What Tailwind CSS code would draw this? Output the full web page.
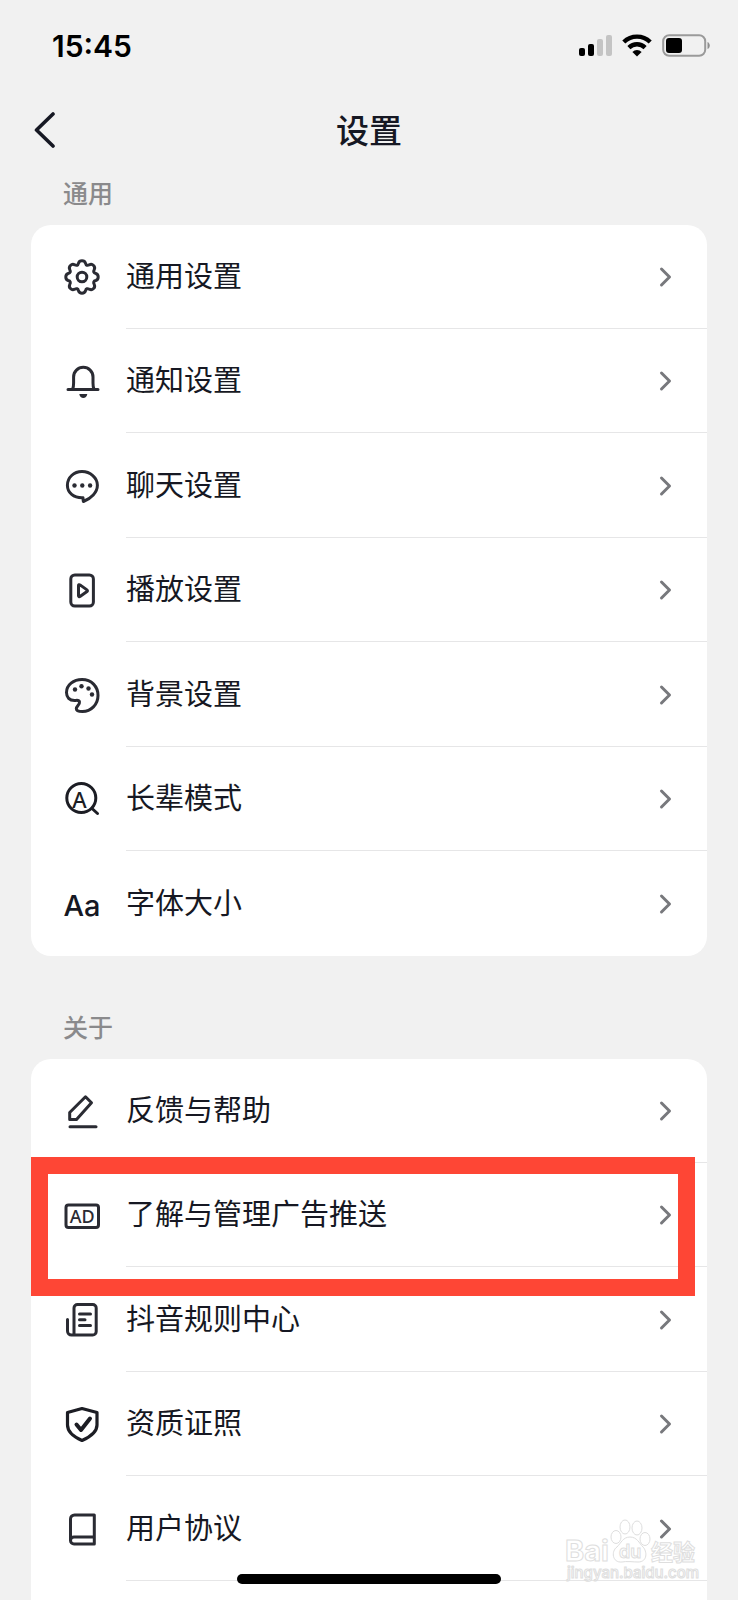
<!DOCTYPE html>
<html lang="zh-CN">

<head>
  <meta charset="UTF-8">
  <meta name="viewport" content="width=device-width, initial-scale=1.0">
  <title>设置</title>
  <script src="https://cdn.jsdelivr.net/npm/@tailwindcss/browser@4"></script>
</head>

<body class="bg-[#f1f1f1] text-[#161823] font-['Inter','Noto_Sans_CJK_SC',sans-serif]">
  <div class="relative flex h-screen flex-col overflow-hidden">

    <!-- Status bar -->
    <div class="flex h-23 shrink-0 items-center justify-between pr-7 pl-13 text-black">
      <span class="text-[30px] font-semibold">15:45</span>
      <div class="flex items-center gap-2.5">
        <svg class="h-6 w-[34px]" viewBox="0 0 34 24">
          <rect x="1" y="14" width="6" height="8" rx="2" />
          <rect x="10" y="10" width="6" height="12" rx="2" />
          <rect x="19" y="5" width="6" height="17" rx="2" fill="#c4c4c4" />
          <rect x="28" y="1" width="6" height="21" rx="2" fill="#c4c4c4" />
        </svg>
        <svg class="h-6 w-[30px]" viewBox="0 0 30 24" fill="none" stroke="#000" stroke-width="4.4">
          <path d="M1.8 8a19 19 0 0 1 26.4 0" />
          <path d="M6.9 13.600a11.6 11.6 0 0 1 16.2 0" />
          <path d="M15 22.4l-4.6-4.5a6.6 6.6 0 0 1 9.200 0z" fill="#000" stroke="none" />
        </svg>
        <svg class="h-6 w-12" viewBox="0 0 48 24">
          <rect x="1.200" y="1.200" width="42" height="20.600" rx="6" fill="none" stroke="#9a9a9a" stroke-width="2" />
          <rect x="4" y="4" width="16" height="15" rx="3" />
          <path d="M45.500 8c3 1 3 6 0 7z" fill="#8f8f8f" />
        </svg>
      </div>
    </div>

    <!-- Title bar -->
    <header class="relative flex h-20 shrink-0 items-center justify-center">
      <button type="button" aria-label="返回" class="absolute left-8">
        <svg class="h-10 w-6" viewBox="0 0 24 40" fill="none" stroke="currentColor" stroke-width="3.600" stroke-linecap="round" stroke-linejoin="round">
          <path d="M21 2L4.500 18 21 34" />
        </svg>
      </button>
      <h1 class="text-[33px] font-medium">设置</h1>
    </header>

    <main class="flex flex-1 flex-col px-[31px]">
      <h2 class="h-[53px] shrink-0 pl-8 text-[25px] leading-[45px] font-medium text-[#8a8a8c]">通用</h2>
      <ul class="shrink-0 rounded-[20px] bg-white">
        <li>
          <a href="#general" class="flex items-center gap-[26px] pl-[33px]">
            <svg class="size-9" viewBox="0 0 36 36" fill="none" stroke="#2a2b33" stroke-width="3" stroke-linejoin="round">
              <path d="M14.500 4.200C15.500 1 20.500 1 21.500 4.200C22 6.500 23.500 6.800 25.300 5.800C28.500 4.200 31.800 7.500 30.200 10.700C29.200 12.500 29.500 14 31.800 14.500C35 15.500 35 20.500 31.800 21.500C29.500 22 29.200 23.500 30.200 25.300C31.800 28.500 28.500 31.800 25.300 30.200C23.500 29.200 22 29.500 21.500 31.800C20.500 35 15.500 35 14.500 31.800C14 29.500 12.500 29.200 10.700 30.200C7.500 31.800 4.200 28.500 5.800 25.300C6.800 23.500 6.500 22 4.200 21.500C1 20.500 1 15.500 4.200 14.500C6.500 14 6.800 12.500 5.800 10.700C4.200 7.500 7.500 4.200 10.700 5.800C12.500 6.800 14 6.500 14.500 4.200Z" />
              <circle cx="18" cy="18" r="4.800" />
            </svg>
            <span class="flex h-26 flex-1 items-center justify-between border-b border-[#e6e6e7] pr-8">
              <span class="text-[29px]">通用设置</span>
              <svg class="h-6 w-4" viewBox="0 0 16 24" fill="none" stroke="#77787c" stroke-width="3" stroke-linecap="round" stroke-linejoin="round"><path d="M2.500 4l8 8-8 8" /></svg>
            </span>
          </a>
        </li>
        <li class="pb-px">
          <a href="#notify" class="flex items-center gap-[26px] pl-[33px]">
            <svg class="size-9" viewBox="0 0 36 36" fill="none" stroke="#2a2b33" stroke-width="3" stroke-linecap="round">
              <path d="M4 26.500H34M8.700 26C9.500 24 9.600 22 9.600 20V14a9.700 9.700 0 0 1 19.400 0V20C29 22 29.100 24 29.900 26" />
              <path d="M15.300 31h8c-.5 5.200-7.500 5.200-8 0z" fill="#2a2b33" stroke="none" />
            </svg>
            <span class="flex h-26 flex-1 items-center justify-between border-b border-[#e6e6e7] pr-8">
              <span class="text-[29px]">通知设置</span>
              <svg class="h-6 w-4" viewBox="0 0 16 24" fill="none" stroke="#77787c" stroke-width="3" stroke-linecap="round" stroke-linejoin="round"><path d="M2.500 4l8 8-8 8" /></svg>
            </span>
          </a>
        </li>
        <li>
          <a href="#chat" class="flex items-center gap-[26px] pl-[33px]">
            <svg class="size-9" viewBox="0 0 36 36" fill="none" stroke="#2a2b33" stroke-width="3" stroke-linejoin="round">
              <path d="M19 29.800C9.500 30.200 3.400 24.600 3.400 17.300C3.400 9.500 9.800 3.600 18 3.600S33.400 9.500 33.400 17.300C33.400 24.500 27 30.500 19.400 33.500C19 32.500 19.200 31 19 29.800Z" />
              <g fill="#2a2b33" stroke="none"><circle cx="10.500" cy="17.500" r="2.200" /><circle cx="18.300" cy="17.500" r="2.200" /><circle cx="26.100" cy="17.500" r="2.200" /></g>
            </svg>
            <span class="flex h-26 flex-1 items-center justify-between border-b border-[#e6e6e7] pr-8">
              <span class="text-[29px]">聊天设置</span>
              <svg class="h-6 w-4" viewBox="0 0 16 24" fill="none" stroke="#77787c" stroke-width="3" stroke-linecap="round" stroke-linejoin="round"><path d="M2.500 4l8 8-8 8" /></svg>
            </span>
          </a>
        </li>
        <li class="pb-px">
          <a href="#playback" class="flex items-center gap-[26px] pl-[33px]">
            <svg class="size-9" viewBox="0 0 36 36" fill="none" stroke="#2a2b33" stroke-width="3" stroke-linejoin="round">
              <rect x="6.800" y="3" width="22.600" height="31" rx="4" />
              <path d="M14.500 13.500v10.200c0 .8.800 1.200 1.500.8l7-5c.6-.4.600-1.200 0-1.600l-7-5c-.7-.5-1.500-.1-1.500.6z" />
            </svg>
            <span class="flex h-26 flex-1 items-center justify-between border-b border-[#e6e6e7] pr-8">
              <span class="text-[29px]">播放设置</span>
              <svg class="h-6 w-4" viewBox="0 0 16 24" fill="none" stroke="#77787c" stroke-width="3" stroke-linecap="round" stroke-linejoin="round"><path d="M2.500 4l8 8-8 8" /></svg>
            </span>
          </a>
        </li>
        <li>
          <a href="#background" class="flex items-center gap-[26px] pl-[33px]">
            <svg class="size-9" viewBox="0 0 36 36" fill="none" stroke="#2a2b33" stroke-width="3" stroke-linejoin="round">
              <path d="M10.500 23.500C5.500 23.500 2.500 20.500 2.500 15.500C2.500 8 9.500 2.500 18 2.500C27.500 2.500 34 9.500 34 18.500C34 27.500 27 34.500 18.500 34.500C15 34.500 12.300 33.500 12.300 31.500C12.300 29.500 16 27.500 15.500 25C15 22.500 12.500 23.500 10.500 23.500Z" />
              <g fill="#2a2b33" stroke="none"><circle cx="11" cy="12.500" r="2.200" /><circle cx="17.500" cy="9.300" r="2.200" /><circle cx="24.500" cy="11.500" r="2.200" /><circle cx="28" cy="17.500" r="2.200" /></g>
            </svg>
            <span class="flex h-26 flex-1 items-center justify-between border-b border-[#e6e6e7] pr-8">
              <span class="text-[29px]">背景设置</span>
              <svg class="h-6 w-4" viewBox="0 0 16 24" fill="none" stroke="#77787c" stroke-width="3" stroke-linecap="round" stroke-linejoin="round"><path d="M2.500 4l8 8-8 8" /></svg>
            </span>
          </a>
        </li>
        <li class="pb-px">
          <a href="#elder" class="flex items-center gap-[26px] pl-[33px]">
            <svg class="size-9" viewBox="0 0 36 36" fill="none" stroke="#1c1d24" stroke-width="3" stroke-linecap="round">
              <circle cx="17.300" cy="17" r="14.500" />
              <path d="M28 27.500l5.500 5" />
              <text x="15.500" y="27" text-anchor="middle" font-family="Noto Sans" font-size="22" font-weight="500" fill="#1c1d24" stroke="none">A</text>
            </svg>
            <span class="flex h-26 flex-1 items-center justify-between border-b border-[#e6e6e7] pr-8">
              <span class="text-[29px]">长辈模式</span>
              <svg class="h-6 w-4" viewBox="0 0 16 24" fill="none" stroke="#77787c" stroke-width="3" stroke-linecap="round" stroke-linejoin="round"><path d="M2.500 4l8 8-8 8" /></svg>
            </span>
          </a>
        </li>
        <li>
          <a href="#font-size" class="flex items-center gap-[26px] pl-[33px]">
            <span class="flex w-9 justify-center pt-1 text-[29px] font-medium">Aa</span>
            <span class="flex h-26 flex-1 items-center justify-between pr-8">
              <span class="text-[29px]">字体大小</span>
              <svg class="h-6 w-4" viewBox="0 0 16 24" fill="none" stroke="#77787c" stroke-width="3" stroke-linecap="round" stroke-linejoin="round"><path d="M2.500 4l8 8-8 8" /></svg>
            </span>
          </a>
        </li>
      </ul>

      <h2 class="mt-[50px] h-[53px] shrink-0 pl-8 text-[25px] leading-[45px] font-medium text-[#8a8a8c]">关于</h2>
      <ul class="flex-1 rounded-t-[20px] bg-white">
        <li>
          <a href="#feedback" class="flex items-center gap-[26px] pl-[33px]">
            <svg class="size-9" viewBox="0 0 36 36" fill="none" stroke="#2a2b33" stroke-width="3" stroke-linecap="round" stroke-linejoin="round">
              <path d="M5.700 26.500v-7L21.500 3.800l6 6L12.500 26.500z" />
              <path d="M6 33.700H32" />
            </svg>
            <span class="flex h-26 flex-1 items-center justify-between border-b border-[#e6e6e7] pr-8">
              <span class="text-[29px]">反馈与帮助</span>
              <svg class="h-6 w-4" viewBox="0 0 16 24" fill="none" stroke="#77787c" stroke-width="3" stroke-linecap="round" stroke-linejoin="round"><path d="M2.500 4l8 8-8 8" /></svg>
            </span>
          </a>
        </li>
        <li class="relative pb-px">
          <a href="#ads" class="flex items-center gap-[26px] pl-[33px]">
            <svg class="size-9" viewBox="0 0 36 36" fill="none" stroke="#2a2b33" stroke-width="3">
              <rect x="2" y="8" width="32.500" height="22.500" rx="2.500" />
              <text x="18.200" y="25.700" text-anchor="middle" font-family="Noto Sans" font-size="18" font-weight="500" fill="#2a2b33" stroke="none">AD</text>
            </svg>
            <span class="flex h-26 flex-1 items-center justify-between border-b border-[#e6e6e7] pr-8">
              <span class="text-[29px]">了解与管理广告推送</span>
              <svg class="h-6 w-4" viewBox="0 0 16 24" fill="none" stroke="#77787c" stroke-width="3" stroke-linecap="round" stroke-linejoin="round"><path d="M2.500 4l8 8-8 8" /></svg>
            </span>
          </a>
          <!-- Highlight frame -->
          <div class="pointer-events-none absolute -top-1.5 right-3 -bottom-7 left-0 z-10 border-[17px] border-[#fe4635]"></div>
        </li>
        <li>
          <a href="#rules" class="flex items-center gap-[26px] pl-[33px]">
            <svg class="size-9" viewBox="0 0 36 36" fill="none" stroke="#2a2b33" stroke-width="3" stroke-linecap="round" stroke-linejoin="round">
              <path d="M10 33V6a3.500 3.500 0 0 1 3.500-3.500H28.700a3.500 3.500 0 0 1 3.500 3.500V29.500A3.500 3.500 0 0 1 28.700 33H7.500A4 4 0 0 1 3.500 29V17.500" />
              <path d="M15.500 12H26.500M15.500 17.800h5.500M15.500 23.500H26.500" />
            </svg>
            <span class="flex h-26 flex-1 items-center justify-between border-b border-[#e6e6e7] pr-8">
              <span class="text-[29px]">抖音规则中心</span>
              <svg class="h-6 w-4" viewBox="0 0 16 24" fill="none" stroke="#77787c" stroke-width="3" stroke-linecap="round" stroke-linejoin="round"><path d="M2.500 4l8 8-8 8" /></svg>
            </span>
          </a>
        </li>
        <li class="pb-px">
          <a href="#license" class="flex items-center gap-[26px] pl-[33px]">
            <svg class="size-9" viewBox="0 0 36 36" fill="none" stroke="#1c1d24" stroke-width="3.200" stroke-linecap="round" stroke-linejoin="round">
              <path d="M18 2.500L33 6.500v12.500c0 7-7 12-15 15.500C10 31 3.500 26 3.500 19V6.500z" />
              <path d="M12.500 18.500l4.500 5.500 9-11.500" stroke-width="4" />
            </svg>
            <span class="flex h-26 flex-1 items-center justify-between border-b border-[#e6e6e7] pr-8">
              <span class="text-[29px]">资质证照</span>
              <svg class="h-6 w-4" viewBox="0 0 16 24" fill="none" stroke="#77787c" stroke-width="3" stroke-linecap="round" stroke-linejoin="round"><path d="M2.500 4l8 8-8 8" /></svg>
            </span>
          </a>
        </li>
        <li>
          <a href="#agreement" class="flex items-center gap-[26px] pl-[33px]">
            <svg class="size-9" viewBox="0 0 36 36" fill="none" stroke="#2a2b33" stroke-width="3" stroke-linejoin="round">
              <path d="M30.300 4H10.500A4 4 0 0 0 6.500 8V29.500A3.500 3.500 0 0 0 10 33H30.300z" />
              <path d="M6.500 29.500a3.500 3.500 0 0 1 3.500-3.500H30.300" />
            </svg>
            <span class="flex h-26 flex-1 items-center justify-between border-b border-[#e6e6e7] pr-8">
              <span class="text-[29px]">用户协议</span>
              <svg class="h-6 w-4" viewBox="0 0 16 24" fill="none" stroke="#77787c" stroke-width="3" stroke-linecap="round" stroke-linejoin="round"><path d="M2.500 4l8 8-8 8" /></svg>
            </span>
          </a>
        </li>
      </ul>
    </main>

    <!-- Watermark -->
    <svg class="pointer-events-none absolute right-9 bottom-3 h-18 w-[138px]" viewBox="0 0 138 72" fill="#fff" stroke="#dedede" stroke-width="1">
      <text x="1" y="45" font-size="29" font-weight="700">Bai</text>
      <text x="87" y="44" font-size="22" font-weight="700">经验</text>
      <ellipse cx="52" cy="21" rx="5" ry="6.500" />
      <ellipse cx="61" cy="11" rx="5" ry="7" />
      <ellipse cx="73" cy="12" rx="5" ry="7" />
      <ellipse cx="81" cy="23" rx="5" ry="6.500" />
      <path d="M66 21c7 0 9 6 13 10s5 15-5 15c-4 0-12-1-16 0-10 1-11-11-5-15 4-4 6-10 13-10z" />
      <text x="55" y="42" font-size="18" font-weight="600">du</text>
      <text x="3" y="62" font-size="15" font-weight="500">jingyan.baidu.com</text>
    </svg>

    <!-- Home indicator -->
    <div class="absolute bottom-4 left-1/2 h-2.5 w-[264px] -translate-x-1/2 rounded-full bg-black"></div>
  </div>
</body>

</html>
